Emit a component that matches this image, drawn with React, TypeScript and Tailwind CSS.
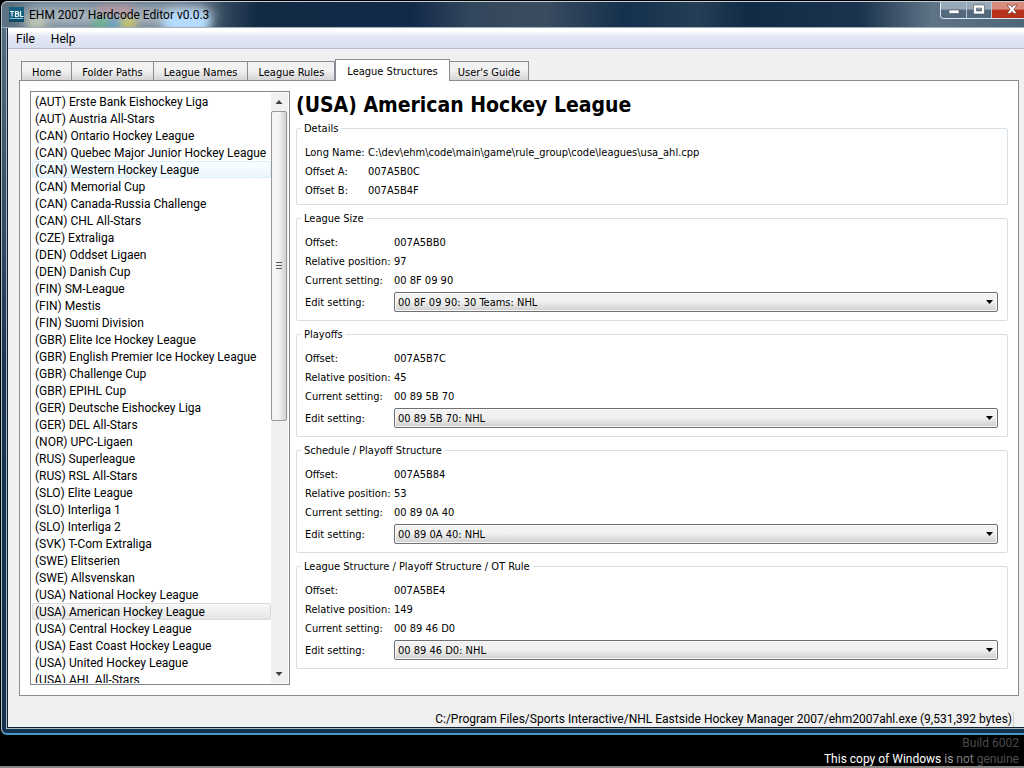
import { useState } from "react";
import clsx from "clsx";

const leagues = [
  "(AUT) Erste Bank Eishockey Liga",
  "(AUT) Austria All-Stars",
  "(CAN) Ontario Hockey League",
  "(CAN) Quebec Major Junior Hockey League",
  "(CAN) Western Hockey League",
  "(CAN) Memorial Cup",
  "(CAN) Canada-Russia Challenge",
  "(CAN) CHL All-Stars",
  "(CZE) Extraliga",
  "(DEN) Oddset Ligaen",
  "(DEN) Danish Cup",
  "(FIN) SM-League",
  "(FIN) Mestis",
  "(FIN) Suomi Division",
  "(GBR) Elite Ice Hockey League",
  "(GBR) English Premier Ice Hockey League",
  "(GBR) Challenge Cup",
  "(GBR) EPIHL Cup",
  "(GER) Deutsche Eishockey Liga",
  "(GER) DEL All-Stars",
  "(NOR) UPC-Ligaen",
  "(RUS) Superleague",
  "(RUS) RSL All-Stars",
  "(SLO) Elite League",
  "(SLO) Interliga 1",
  "(SLO) Interliga 2",
  "(SVK) T-Com Extraliga",
  "(SWE) Elitserien",
  "(SWE) Allsvenskan",
  "(USA) National Hockey League",
  "(USA) American Hockey League",
  "(USA) Central Hockey League",
  "(USA) East Coast Hockey League",
  "(USA) United Hockey League",
  "(USA) AHL All-Stars",
];

const tabs = [
  "Home",
  "Folder Paths",
  "League Names",
  "League Rules",
  "League Structures",
  "User's Guide",
];

const settings = [
  { id: "size", title: "League Size", offset: "007A5BB0", position: "97", current: "00 8F 09 90", option: "00 8F 09 90: 30 Teams: NHL" },
  { id: "playoffs", title: "Playoffs", offset: "007A5B7C", position: "45", current: "00 89 5B 70", option: "00 89 5B 70: NHL" },
  { id: "schedule", title: "Schedule / Playoff Structure", offset: "007A5B84", position: "53", current: "00 89 0A 40", option: "00 89 0A 40: NHL" },
  { id: "ot", title: "League Structure / Playoff Structure / OT Rule", offset: "007A5BE4", position: "149", current: "00 89 46 D0", option: "00 89 46 D0: NHL" },
];

function TitleBar() {
  return (
    <header className="relative flex h-[27px] shrink-0 items-center overflow-hidden rounded-tl-md border-y border-t-[#c3d0da] border-b-[#9fb0bc] bg-[linear-gradient(90deg,#5d7180_0%,#53697a_18%,#132a44_25%,#12294a_40%,#33475c_46%,#3a4c60_53%,#14304c_61%,#263e56_68%,#112a46_73%,#1b334e_84%,#5f7486_91%,#4d6679_100%)] pl-[7px]">
      {/* Desktop icons showing through the glass */}
      <div className="absolute top-1 left-5 h-5 w-48 rounded-full bg-[#dfe6ea] opacity-70 blur-sm" aria-hidden="true" />
      <div className="absolute top-4 left-6 h-3 w-5 rounded-full bg-[#e9e7b8] opacity-60 blur-xs" aria-hidden="true" />
      <div className="absolute top-4 left-[90px] h-3 w-5 rounded-full bg-[#5fb98a] opacity-80 blur-xs" aria-hidden="true" />
      <div className="absolute top-4 left-[106px] h-3 w-4 rounded-full bg-[#5fa4de] opacity-80 blur-xs" aria-hidden="true" />
      <div className="absolute top-4 left-[118px] h-3 w-4 rounded-full bg-[#e8d84a] opacity-80 blur-xs" aria-hidden="true" />
      <div className="absolute top-1 left-24 h-2 w-9 rounded-full bg-[#d98a94] opacity-60 blur-xs" aria-hidden="true" />
      <div className="absolute top-2 left-40 h-6 w-12 rounded-full bg-[#b5dcff] blur-xs" aria-hidden="true" />

      <svg className="relative size-[15px]" viewBox="0 0 15 15" aria-hidden="true">
        <rect width="15" height="15" fill="#17607f" />
        <rect y="12" width="15" height="3" fill="#0d4a66" />
        <path d="M1 4.500h4M3 4.500v5M6.500 4v5.500h2q1.300 0 1.300-1.400t-1.300-1.400h-2M6.500 4.500h1.800q1.200 0 1.200 1.100t-1.200 1.100M11.500 4v5.500h3" fill="none" stroke="#e8f4f8" strokeWidth="1.200" />
        <path d="M1 11.500h13" stroke="#8fc0d2" />
      </svg>
      <h1 className="relative ml-[5px] font-[Roboto,sans-serif] text-[12px] text-black">
        EHM 2007 Hardcode Editor v0.0.3
      </h1>

      <div className="absolute top-0 right-0 flex h-[17px] w-[84px] overflow-hidden rounded-bl border-b border-l border-[#dbe5ec]">
        <button aria-label="Minimize" className="flex w-[26px] items-center justify-center border-r border-[#b9c6d0] bg-linear-to-b from-[#9aa9b7] from-45% to-[#536a7d] to-50%">
          <svg className="h-3 w-3" viewBox="0 0 12 12" aria-hidden="true">
            <rect x="1" y="6" width="10" height="3.500" fill="#fff" stroke="#4b5663" strokeWidth=".6" />
          </svg>
        </button>
        <button aria-label="Maximize" className="flex w-[25px] items-center justify-center border-r border-[#b9c6d0] bg-linear-to-b from-[#9aa9b7] from-45% to-[#536a7d] to-50%">
          <svg className="h-3 w-3" viewBox="0 0 12 12" aria-hidden="true">
            <path d="M.5 1h11v9H.5zM3.500 4h5v3h-5z" fill="#fff" fillRule="evenodd" stroke="#4b5663" strokeWidth=".6" />
          </svg>
        </button>
        <button aria-label="Close" className="flex flex-1 items-center justify-center bg-linear-to-b from-[#d98b7c] from-45% to-[#b8301a] to-50% pl-2">
          <svg className="h-3 w-3" viewBox="0 0 12 12" aria-hidden="true">
            <path d="M1 1h3.200L6 3.200 7.800 1H11L7.800 5.300 11 9.600H7.800L6 7.400 4.200 9.600H1l3.200-4.300z" fill="#fff" stroke="#5b2a2a" strokeWidth=".6" />
          </svg>
        </button>
      </div>
    </header>
  );
}

function LeagueList({ selected, onSelect }: { selected: string; onSelect: (name: string) => void }) {
  return (
    <div className="flex w-[260px] shrink-0 overflow-hidden border border-[#828790] bg-white p-px">
      <ul
        role="listbox"
        aria-label="Leagues"
        className="min-w-0 flex-1 overflow-hidden font-[Roboto,sans-serif] text-[12px] leading-[13px] text-black"
      >
        {leagues.map((name) => (
          <li
            key={name}
            role="option"
            aria-selected={name === selected}
            onClick={() => onSelect(name)}
            className={clsx(
              "rounded-xs border px-0.5 pt-0.5 whitespace-nowrap",
              name === selected && "border-[#d9d9d9] bg-linear-to-b from-[#f8f8f8] to-[#e5e5e5]",
              name !== selected && name === "(CAN) Western Hockey League" && "border-[#d8f0fa] bg-linear-to-b from-[#fafdff] to-[#ebf7fd]",
              name !== selected && name !== "(CAN) Western Hockey League" && "border-transparent",
            )}
          >
            {name}
          </li>
        ))}
      </ul>

      <div className="flex w-[17px] shrink-0 flex-col bg-[#f0f0f0] pr-px">
        <button aria-label="Scroll up" className="flex h-[18px] items-center justify-center">
          <svg className="h-1 w-2" viewBox="0 0 8 4" aria-hidden="true">
            <path d="M4 0l3.500 4h-7z" fill="#404040" />
          </svg>
        </button>
        <div className="flex-1">
          <div className="flex h-[56%] items-center justify-center rounded-xs border border-[#979797] bg-linear-to-r from-[#f5f5f5] from-45% to-[#cfcfcf]">
            <svg className="h-2 w-2" viewBox="0 0 8 8" aria-hidden="true">
              <path d="M1 .5h6M1 3.500h6M1 6.500h6" stroke="#555" />
            </svg>
          </div>
        </div>
        <button aria-label="Scroll down" className="flex h-[18px] items-center justify-center">
          <svg className="h-1 w-2" viewBox="0 0 8 4" aria-hidden="true">
            <path d="M4 4L.5 0h7z" fill="#404040" />
          </svg>
        </button>
      </div>
    </div>
  );
}

function SettingGroup({ id, title, offset, position, current, option }: (typeof settings)[number]) {
  return (
    <fieldset className="rounded-xs border border-[#d5dfe5] pr-[9px] pb-2 pl-2">
      <legend className="-ml-1 px-[3px] pt-0.5 leading-[14px]">{title}</legend>
      <dl className="grid grid-cols-[89px_1fr] pt-[7px] leading-[19px]">
        <dt>Offset:</dt>
        <dd>{offset}</dd>
        <dt>Relative position:</dt>
        <dd>{position}</dd>
        <dt>Current setting:</dt>
        <dd>{current}</dd>
      </dl>
      <div className="mt-[2px] grid grid-cols-[89px_1fr] items-center">
        <label htmlFor={id} className="pt-0.5">Edit setting:</label>
        <div className="relative">
          <select
            id={id}
            className="block h-5 w-full appearance-none rounded-xs border border-[#707070] bg-linear-to-b from-[#f2f2f2] from-45% to-[#cfcfcf] px-[3px] pt-0.5 leading-4 shadow-[inset_0_0_0_1px_#f8f8f8]"
          >
            <option>{option}</option>
          </select>
          <svg className="pointer-events-none absolute top-2 right-[5px] h-1 w-[7px]" viewBox="0 0 7 4" aria-hidden="true">
            <path d="M0 0h7L3.500 4z" fill="#000" />
          </svg>
        </div>
      </div>
    </fieldset>
  );
}

export default function App() {
  const [tab, setTab] = useState("League Structures");
  const [selected, setSelected] = useState("(USA) American Hockey League");

  return (
    <div className="flex h-screen flex-col overflow-hidden bg-black font-['DejaVu_Sans_Condensed','DejaVu_Sans',sans-serif] text-[11px] text-black">
      <div className="flex min-h-0 flex-1 flex-col pt-px pl-px">
        <div className="flex min-h-0 flex-1 flex-col rounded-l-md border-b-2 border-l border-b-[#4a9cc8] border-l-[#a9c4d4] bg-linear-to-b from-[#5c7080] via-[#1a3450] to-[#15304c]">
          <TitleBar />

          <div className="mb-1 ml-1 flex min-h-0 flex-1 flex-col border-b border-l border-[#a8b8c4]">
            <div className="flex min-h-0 flex-1 flex-col border-b border-l border-[#10202e] bg-[#f0f0f0]">
              <nav className="flex h-[21px] shrink-0 items-center gap-4 border-b border-[#b6bccc] bg-linear-to-b from-white from-15% via-[#e4e8f5] via-40% to-[#dadff0] pt-0.5 pl-2 font-[Roboto,sans-serif] text-[12px]">
                <button>File</button>
                <button>Help</button>
              </nav>

              <main className="flex min-h-0 flex-1 flex-col pt-[11px] pr-[5px] pl-[11px]">
                <div role="tablist" className="flex h-5 shrink-0 items-end pl-0.5">
                  {tabs.map((name) => (
                    <button
                      key={name}
                      role="tab"
                      aria-selected={name === tab}
                      onClick={() => setTab(name)}
                      className={clsx(
                        "border-[#898c95] whitespace-nowrap",
                        name === tab
                          ? "relative z-10 -mb-px h-[22px] border-x border-t bg-white px-[11px] pt-1 pb-0.5"
                          : "h-[19px] border-t border-r bg-linear-to-b from-[#f2f2f2] from-45% to-[#d4d4d4] px-2.5 pt-[3px] first:border-l last:px-2",
                      )}
                    >
                      {name}
                    </button>
                  ))}
                </div>

                <div role="tabpanel" className="flex min-h-0 flex-1 gap-[6px] border border-[#898c95] bg-white py-[10px] pr-[10px] pl-[10px]">
                  <LeagueList selected={selected} onSelect={setSelected} />

                  <section className="min-w-0 flex-1">
                    <h2 className="pt-px text-[21px] leading-[26px] font-bold">(USA) American Hockey League</h2>

                    <div className="mt-0.5 flex flex-col gap-[5px]">
                      <fieldset className="rounded-xs border border-[#d5dfe5] px-2 pb-1">
                        <legend className="-ml-1 px-[3px] pt-0.5 leading-[14px]">Details</legend>
                        <dl className="grid grid-cols-[63px_1fr] pt-[7px] leading-[19px]">
                          <dt>Long Name:</dt>
                          <dd>C:\dev\ehm\code\main\game\rule_group\code\leagues\usa_ahl.cpp</dd>
                          <dt>Offset A:</dt>
                          <dd>007A5B0C</dd>
                          <dt>Offset B:</dt>
                          <dd>007A5B4F</dd>
                        </dl>
                      </fieldset>

                      {settings.map((group) => (
                        <SettingGroup key={group.id} {...group} />
                      ))}
                    </div>
                  </section>
                </div>
              </main>

              <footer className="flex h-[31px] shrink-0 items-center justify-end pt-3.5 pr-2.5 font-[Roboto,sans-serif] text-[12px] leading-4">
                <span className="border-r border-[#d0d0d0] pr-px">
                  C:/Program Files/Sports Interactive/NHL Eastside Hockey Manager 2007/ehm2007ahl.exe (9,531,392 bytes)
                </span>
              </footer>
            </div>
          </div>
        </div>
      </div>

      {/* Desktop below the window */}
      <div className="h-[33px] shrink-0 border-b-2 border-[#8c8886] pr-[5px] text-right font-[Roboto,sans-serif] text-[12px] leading-4">
        <p className="text-[#4a4a4a]">Build 6002</p>
        <p className="text-white">
          This copy of Windows <span className="text-[#a8a8a8]">is</span> <span className="text-[#7c7c7c]">not</span>{" "}
          <span className="text-[#505050]">genuine</span>
        </p>
      </div>
    </div>
  );
}
